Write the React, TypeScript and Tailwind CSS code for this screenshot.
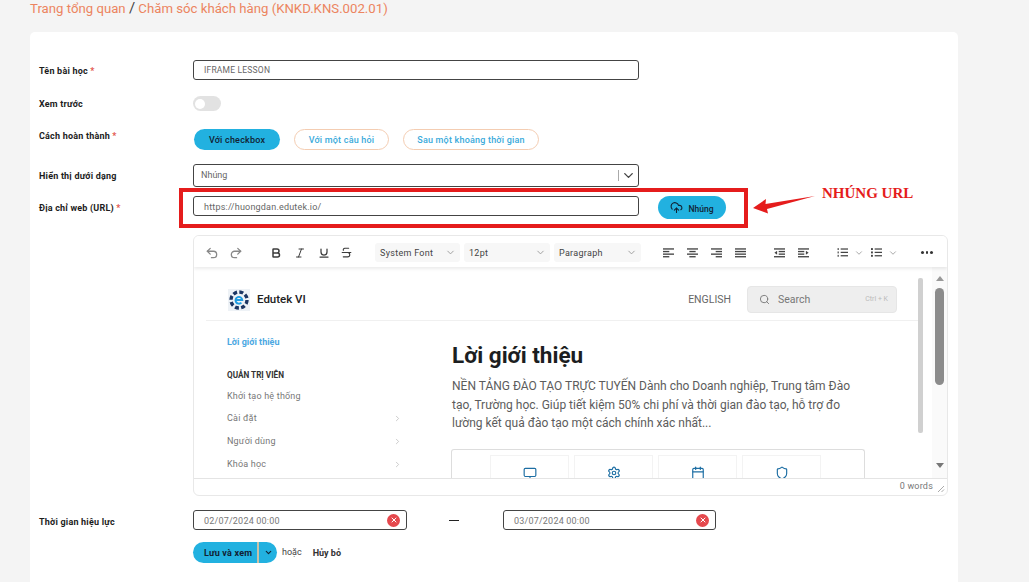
import React from 'react';
import {
  Undo2,
  Redo2,
  Bold,
  Italic,
  Underline,
  Strikethrough,
  ChevronDown,
  ChevronRight,
  Search,
  Settings,
  Calendar,
  Shield,
  CloudUpload,
  X,
} from 'lucide-react';

const Label: React.FC<{ text: string; required?: boolean; className?: string }> = ({ text, required, className }) => (
  <div className={`w-[154px] shrink-0 text-[9px] leading-[12px] font-bold tracking-[0.2px] text-[#1c1c1c] ${className ?? ''}`}>
    {text}
    {required && <span className="text-[#e2574c]"> *</span>}
  </div>
);

const Bars: React.FC<{ rows: [number, number][] }> = ({ rows }) => (
  <svg width="11" height="10" viewBox="0 0 14 12" fill="#444">
    {rows.map(([x, w], i) => (
      <rect key={i} x={x} y={i * 3.3} width={w} height="1.7" />
    ))}
  </svg>
);

const ToolCell: React.FC<{ children: React.ReactNode; className?: string }> = ({ children, className }) => (
  <div className={`w-[24px] h-[24px] flex items-center justify-center shrink-0 text-[#3c3c3c] ${className ?? ''}`}>{children}</div>
);

const ToolSelect: React.FC<{ text: string; className: string }> = ({ text, className }) => (
  <div className={`h-[19px] bg-[#f7f7f7] rounded-[3px] flex items-center justify-between pl-[5px] pr-[4px] text-[9px] tracking-[0.3px] text-[#444] shrink-0 ${className}`}>
    <span className="pt-[3px]">{text}</span>
    <ChevronDown size={11} className="text-[#999]" />
  </div>
);

const IndentIcon: React.FC<{ flip?: boolean }> = ({ flip }) => (
  <svg width="11" height="10" viewBox="0 0 14 12" fill="#444" className={flip ? '-scale-x-100' : ''}>
    <rect x="0" y="0" width="14" height="1.7" />
    <rect x="6" y="3.3" width="8" height="1.7" />
    <rect x="6" y="6.6" width="8" height="1.7" />
    <rect x="0" y="9.9" width="14" height="1.7" />
    <path d="M4 3.2 L0.5 5.7 L4 8.2 Z" />
  </svg>
);

const ListIcon: React.FC<{ numbered?: boolean }> = ({ numbered }) => (
  <svg width="11" height="11" viewBox="0 0 15 12" fill="#444">
    {[0, 4.6, 9.2].map((y) => (
      <g key={y}>
        <rect x="5" y={y + 0.4} width="10" height="1.7" />
        <rect x={numbered ? 0.8 : 0} y={y} width={numbered ? 1.6 : 2.6} height="2.6" />
      </g>
    ))}
  </svg>
);

const Logo: React.FC = () => (
  <svg width="22" height="22" viewBox="0 0 22 22" className="shrink-0">
    <rect width="22" height="22" fill="#eef2f6" />
    <circle cx="11" cy="11" r="8" fill="none" stroke="#1c3563" strokeWidth="3.4" strokeDasharray="4 2.3" />
    <circle cx="11" cy="11" r="6" fill="#eef2f6" />
    <path d="M7.7 11 H14.3 A3.4 3.4 0 1 0 13.4 13.6" fill="none" stroke="#1f9be0" strokeWidth="1.9" />
  </svg>
);

const MenuItem: React.FC<{ text: string; chevron?: boolean; className: string }> = ({ text, chevron, className }) => (
  <div className={`flex items-center justify-between w-[175px] text-[9px] leading-[12px] tracking-[0.2px] text-[#777] ${className}`}>
    {text}
    {chevron && <ChevronRight size={9} className="text-[#bbb]" />}
  </div>
);

const FeatureCell: React.FC<{ children: React.ReactNode }> = ({ children }) => (
  <div className="w-[79px] h-[40px] border border-[#f3f3f3] flex justify-center pt-[10px] text-[#1d6ea3] shrink-0">{children}</div>
);

const DateField: React.FC<{ value: string; className: string }> = ({ value, className }) => (
  <div className={`h-[20px] border border-[#444] rounded-[3px] bg-white flex items-center justify-between pl-[10px] pr-[6px] text-[9px] tracking-[0.2px] text-[#777] ${className}`}>
    <span className="pt-[4px]">{value}</span>
    <span className="w-[13px] h-[13px] rounded-full bg-[#e5484d] flex items-center justify-center text-white">
      <X size={8} strokeWidth={3} />
    </span>
  </div>
);

export default function App() {
  return (
    <div className="relative h-[582px] overflow-hidden bg-[#f4f4f4] font-['Roboto',sans-serif]">
      <div className="h-[32px] pl-[30px] text-[13.2px] leading-[17px] text-[#ec8460]">
        Trang tổng quan <span className="text-[#444] text-[15px]">/</span> Chăm sóc khách hàng (KNKD.KNS.002.01)
      </div>

      <div className="ml-[30px] w-[928px] h-[600px] bg-white rounded-t-[5px] pt-[28px] pl-[9px]">
        <div className="flex items-center h-[20px]">
          <Label text="Tên bài học" required className="pt-[2px]" />
          <div className="w-[446px] h-[20px] border border-[#444] rounded-[3px] pl-[10px] flex items-center text-[8.5px] tracking-[0.2px] text-[#666]">
            IFRAME LESSON
          </div>
        </div>

        <div className="flex items-center h-[15px] mt-[16px]">
          <Label text="Xem trước" />
          <div className="w-[28px] h-[15px] rounded-full bg-[#e2e2e2] flex items-center pl-[2px]">
            <div className="w-[10px] h-[10px] rounded-full bg-white" />
          </div>
        </div>

        <div className="flex items-center h-[21px] mt-[18px]">
          <Label text="Cách hoàn thành" required className="pb-[8px]" />
          <div className="flex items-center text-[9px] font-medium tracking-[0.2px]">
            <div className="w-[86px] h-[21px] ml-[1px] pt-[2px] rounded-full bg-[#22b1e0] text-[#123] flex items-center justify-center">Với checkbox</div>
            <div className="w-[95px] h-[21px] ml-[14px] pt-[2px] rounded-full border border-[#f4cdb2] text-[#3aaadb] flex items-center justify-center">Với một câu hỏi</div>
            <div className="w-[136px] h-[21px] ml-[14px] pt-[2px] rounded-full border border-[#f4cdb2] text-[#3aaadb] flex items-center justify-center">Sau một khoảng thời gian</div>
          </div>
        </div>

        <div className="flex items-center h-[23px] mt-[14px]">
          <Label text="Hiển thị dưới dạng" />
          <div className="w-[446px] h-[23px] border border-[#444] rounded-[3px] pl-[7px] flex items-center justify-between text-[9px] text-[#666]">
            Nhúng
            <div className="flex items-center h-[11px] border-l border-[#aaa] pl-[2px] pr-[2px]">
              <ChevronDown size={15} strokeWidth={2.2} className="text-[#444]" />
            </div>
          </div>
        </div>

        <div className="flex items-start h-[20px] mt-[9px]">
          <Label text="Địa chỉ web (URL)" required className="pt-[6px]" />
          <div className="w-[446px] h-[20px] border border-[#444] rounded-[3px] pl-[10px] pt-[4px] flex items-center text-[9px] tracking-[0.2px] text-[#666]">
            https://huongdan.edutek.io/
          </div>
          <div className="w-[68px] h-[23px] ml-[19px] rounded-full bg-[#22b1e0] text-[#123] flex items-center justify-center gap-[5px] text-[8.5px] font-medium">
            <CloudUpload size={13} />
            <span className="pt-[3px]">Nhúng</span>
          </div>
        </div>

        <div className="ml-[154px] mt-[19px] w-[755px] h-[261px] border border-[#e8e8e8] rounded-[6px] overflow-hidden flex flex-col">
          <div className="h-[31px] shrink-0 flex items-center pl-[6px] pt-[2px] shadow-[0_2px_3px_rgba(0,0,0,0.08)] relative z-10 bg-white">
            <ToolCell className="text-[#888]"><Undo2 size={14} strokeWidth={2.2} /></ToolCell>
            <ToolCell className="text-[#888]"><Redo2 size={14} strokeWidth={2.2} /></ToolCell>
            <ToolCell className="ml-[16px]"><Bold size={12} strokeWidth={3} /></ToolCell>
            <ToolCell><Italic size={12} /></ToolCell>
            <ToolCell><Underline size={12} strokeWidth={2.5} /></ToolCell>
            <ToolCell className="-ml-[2px]"><Strikethrough size={13} /></ToolCell>
            <ToolSelect text="System Font" className="w-[85px] ml-[17px]" />
            <ToolSelect text="12pt" className="w-[86px] ml-[4px]" />
            <ToolSelect text="Paragraph" className="w-[87px] ml-[4px]" />
            <ToolCell className="ml-[15px]"><Bars rows={[[0, 14], [0, 8], [0, 14], [0, 8]]} /></ToolCell>
            <ToolCell><Bars rows={[[0, 14], [3, 8], [0, 14], [3, 8]]} /></ToolCell>
            <ToolCell><Bars rows={[[0, 14], [6, 8], [0, 14], [6, 8]]} /></ToolCell>
            <ToolCell><Bars rows={[[0, 14], [0, 14], [0, 14], [0, 14]]} /></ToolCell>
            <ToolCell className="ml-[15px]"><IndentIcon /></ToolCell>
            <ToolCell><IndentIcon flip /></ToolCell>
            <ToolCell className="ml-[15px]"><ListIcon numbered /></ToolCell>
            <ChevronDown size={10} className="w-[10px] text-[#999] shrink-0" />
            <ToolCell><ListIcon /></ToolCell>
            <ChevronDown size={10} className="w-[10px] text-[#999] shrink-0" />
            <div className="ml-[23px] flex gap-[2px]">
              <span className="w-[2.5px] h-[2.5px] rounded-full bg-[#333]" />
              <span className="w-[2.5px] h-[2.5px] rounded-full bg-[#333]" />
              <span className="w-[2.5px] h-[2.5px] rounded-full bg-[#333]" />
            </div>
          </div>

          <div className="h-[211px] shrink-0 flex overflow-hidden">
            <div className="w-[712px] ml-[12px] shrink-0">
              <div className="h-[54px] pt-[19px] border-b border-[#f0f0f0]">
                <div className="flex items-center h-[27px] pl-[22px] pr-[21px]">
                  <Logo />
                  <span className="ml-[7px] text-[11.5px] font-medium text-[#222]">Edutek VI</span>
                  <span className="ml-auto text-[10.5px] text-[#666]">ENGLISH</span>
                  <div className="ml-[16px] w-[150px] h-[27px] rounded-[4px] bg-[#eeeeee] border border-[#e6e6e6] flex items-center pl-[11px] pr-[8px] text-[#777]">
                    <Search size={11} />
                    <span className="ml-[8px] text-[10.5px]">Search</span>
                    <span className="ml-auto text-[7px] text-[#bbb]">Ctrl + K</span>
                  </div>
                </div>
              </div>

              <div className="flex">
                <div className="w-[246px] pl-[21px] pt-[15px] shrink-0">
                  <div className="text-[9px] leading-[12px] font-bold text-[#4ba8e2]">Lời giới thiệu</div>
                  <div className="mt-[21px] text-[8.2px] leading-[12px] font-bold text-[#333]">QUẢN TRỊ VIÊN</div>
                  <MenuItem text="Khởi tạo hệ thống" className="mt-[9px]" />
                  <MenuItem text="Cài đặt" chevron className="mt-[10px]" />
                  <MenuItem text="Người dùng" chevron className="mt-[11px]" />
                  <MenuItem text="Khóa học" chevron className="mt-[11px]" />
                </div>
                <div className="pt-[20px]">
                  <h1 className="text-[22.5px] leading-[28px] font-bold text-[#1c1e21]">Lời giới thiệu</h1>
                  <p className="mt-[8px] text-[12px] leading-[18.5px] text-[#5c5c5c] whitespace-nowrap">
                    NỀN TẢNG ĐÀO TẠO TRỰC TUYẾN Dành cho Doanh nghiệp, Trung tâm Đào
                    <br />
                    tạo, Trường học. Giúp tiết kiệm 50% chi phí và thời gian đào tạo, hỗ trợ đo
                    <br />
                    lường kết quả đào tạo một cách chính xác nhất...
                  </p>
                  <div className="mt-[16px] -ml-[1px] w-[414px] h-[40px] border border-b-0 border-[#ddd] rounded-t-[3px] pl-[38px] pt-[5px] flex gap-[5px] overflow-hidden">
                    <FeatureCell>
                      <svg width="14" height="14" viewBox="0 0 24 24" fill="none" stroke="currentColor" strokeWidth="2">
                        <rect x="2" y="4" width="20" height="14" rx="2" />
                        <path d="M12 18v3" />
                      </svg>
                    </FeatureCell>
                    <FeatureCell><Settings size={14} /></FeatureCell>
                    <FeatureCell><Calendar size={14} /></FeatureCell>
                    <FeatureCell><Shield size={14} /></FeatureCell>
                  </div>
                </div>
              </div>
            </div>

            <div className="w-[5px] shrink-0 pt-[11px] pb-[45px]">
              <div className="h-full bg-[#d0d0d0] rounded-[2px]" />
            </div>
            <div className="w-[9px] shrink-0" />
            <div className="w-[15px] shrink-0 bg-[#fafafa] flex flex-col items-center pt-[9px]">
              <div className="w-0 h-0 border-x-[4px] border-x-transparent border-b-[5px] border-b-[#999]" />
              <div className="mt-[7px] w-[9px] h-[97px] rounded-full bg-[#8c8c8c]" />
              <div className="mt-[78px] w-0 h-0 border-x-[4px] border-x-transparent border-t-[5px] border-t-[#777]" />
            </div>
          </div>

          <div className="flex-1 border-t border-[#e4e4e4] flex items-center justify-end pr-[2px] text-[9px] tracking-[0.2px] text-[#777]">
            0 words
            <svg width="8" height="8" viewBox="0 0 8 8" stroke="#aaa" className="ml-[4px] mt-[3px]">
              <path d="M1 7 L7 1 M4.5 7 L7 4.5" />
            </svg>
          </div>
        </div>

        <div className="flex items-center h-[20px] mt-[14px]">
          <Label text="Thời gian hiệu lực" className="pt-[3px]" />
          <DateField value="02/07/2024 00:00" className="w-[214px]" />
          <div className="w-[10px] h-[1px] bg-[#222] ml-[42px]" />
          <DateField value="03/07/2024 00:00" className="w-[213px] ml-[44px]" />
        </div>

        <div className="flex items-center h-[21px] mt-[12px] ml-[154px] text-[9px]">
          <div className="w-[84px] h-[21px] rounded-full bg-[#22b1e0] text-[#123] font-bold tracking-[0.2px] flex items-center overflow-hidden">
            <span className="w-[64px] pl-[11px] pt-[3px]">Lưu và xem</span>
            <span className="h-full w-[20px] border-l-2 border-[#c9c2a8] flex items-center justify-center">
              <ChevronDown size={9} strokeWidth={3} />
            </span>
          </div>
          <span className="ml-[5px] text-[#444]">hoặc</span>
          <span className="ml-[11px] pt-[2px] font-bold text-[#333]">Hủy bỏ</span>
        </div>
      </div>

      {/* chu thich do ve de len form */}
      <div className="absolute left-[179px] top-[188px] w-[569px] h-[40px] border-4 border-[#e51c1c]" />
      <svg className="absolute left-[750px] top-[192px]" width="70" height="26" viewBox="0 0 70 26">
        <path d="M3 16 L16 7 L15.5 12 L65 4 L17 17 L18 21.5 Z" fill="#e51c1c" />
      </svg>
      <div className="absolute left-[822px] top-[185px] text-[15px] leading-[16px] font-bold text-[#e51c1c] font-['Liberation_Serif',serif]">
        NHÚNG URL
      </div>
    </div>
  );
}
